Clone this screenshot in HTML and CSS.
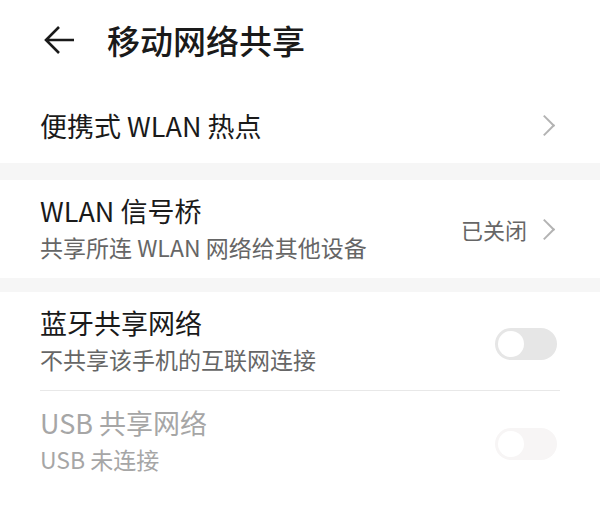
FILE: index.html
```html
<!DOCTYPE html>
<html lang="zh-CN">
<head>
    <meta charset="UTF-8">
    <meta name="viewport" content="width=device-width, initial-scale=1.0">
    <title>移动网络共享</title>
    <link rel="stylesheet" href="styles.css">
</head>
<body>
    <header class="top-bar">
        <svg class="back" width="30" height="30" viewBox="0 0 30 30">
            <path d="M15 2 L2 15 L15 28 M2 15 H30" fill="none" stroke="#1a1a1a" stroke-width="2.6" stroke-linejoin="miter"/>
        </svg>
        <h1>移动网络共享</h1>
    </header>

    <div class="group">
        <div class="item item-single">
            <div class="text">
                <div class="title">便携式 WLAN 热点</div>
            </div>
            <span class="chevron"></span>
        </div>
    </div>

    <div class="band band-first"></div>

    <div class="group">
        <div class="item item-double">
            <div class="text">
                <div class="title">WLAN 信号桥</div>
                <div class="sub">共享所连 WLAN 网络给其他设备</div>
            </div>
            <div class="state">已关闭</div>
            <span class="chevron"></span>
        </div>
    </div>

    <div class="band band-second"></div>

    <div class="group">
        <div class="item item-double divided">
            <div class="text">
                <div class="title">蓝牙共享网络</div>
                <div class="sub">不共享该手机的互联网连接</div>
            </div>
            <span class="switch"></span>
        </div>
        <div class="item item-double disabled">
            <div class="text">
                <div class="title">USB 共享网络</div>
                <div class="sub">USB 未连接</div>
            </div>
            <span class="switch"></span>
        </div>
    </div>
</body>
</html>
```

FILE: styles.css
```css
body {
    margin: 0;
    background-color: #fff;
    font-family: "Noto Sans CJK SC", "Noto Sans", sans-serif;
    color: #1a1a1a;
}
.top-bar {
    display: flex;
    align-items: center;
    height: 80px;
    padding: 0 40px 0 44px;
}
.top-bar .back {
    margin-right: 33px;
}
.top-bar h1 {
    margin: 0;
    font-size: 33px;
    font-weight: 500;
    line-height: 1;
}
.group {
    padding: 0 40px;
}
.item {
    display: flex;
    align-items: center;
}
.item-single {
    height: 76px;
    padding-top: 7px;
}
.item-double {
    height: 98px;
}
.item.divided {
    border-bottom: 1px solid #e8e8e8;
}
.item.divided + .item {
    padding-top: 2px;
    height: 96px;
}
.text {
    flex: 1;
}
.title {
    font-size: 27px;
    line-height: 37px;
}
.sub {
    font-size: 23px;
    line-height: 37px;
    color: #666;
}
.state {
    font-size: 22px;
    color: #666;
    margin-right: 10px;
}
.chevron {
    width: 13px;
    height: 13px;
    border-top: 2px solid #b3b3b3;
    border-right: 2px solid #b3b3b3;
    transform: rotate(45deg);
    margin-right: 8px;
}
.band {
    background-color: #f6f6f6;
}
.band-first {
    height: 17px;
}
.band-second {
    height: 14px;
}
.switch {
    position: relative;
    width: 62px;
    height: 32px;
    border-radius: 16px;
    background-color: #e6e6e6;
    margin-right: 3px;
    margin-top: 6px;
}
.switch::after {
    content: "";
    position: absolute;
    left: 3px;
    top: 3px;
    width: 26px;
    height: 26px;
    border-radius: 50%;
    background-color: #fff;
}
.disabled .title,
.disabled .sub {
    color: #a6a6a6;
}
.disabled .switch {
    background-color: #f7f5f5;
}
```
